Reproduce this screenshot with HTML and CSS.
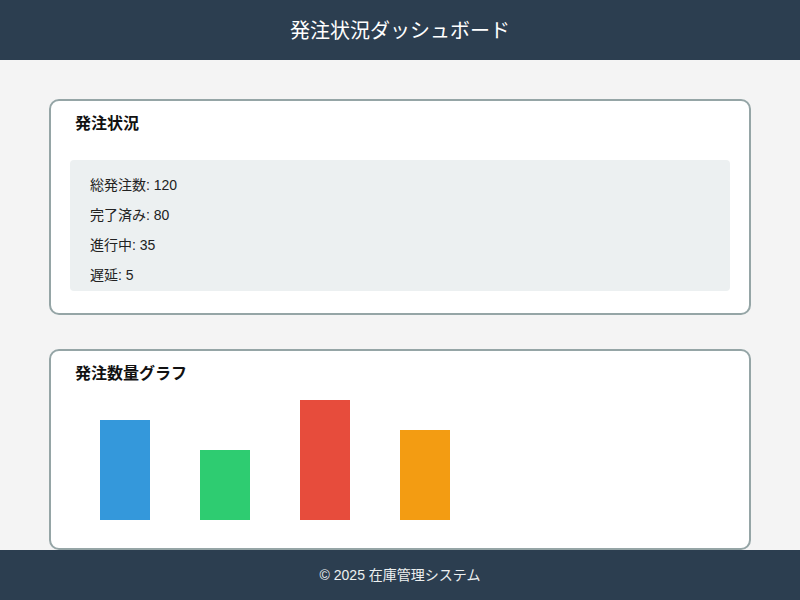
FILE: index.html
```html
<!DOCTYPE html>
<html lang="ja">
<head>
<meta charset="utf-8">
<title>発注状況ダッシュボード</title>
<link rel="stylesheet" href="styles.css">
</head>
<body>
<header class="header">
  <h1 class="header-title">発注状況ダッシュボード</h1>
</header>
<main class="main">
  <section class="card card-status">
    <h2 class="card-title">発注状況</h2>
    <div class="stats">
      <p class="stat">総発注数: 120</p>
      <p class="stat">完了済み: 80</p>
      <p class="stat">進行中: 35</p>
      <p class="stat">遅延: 5</p>
    </div>
  </section>
  <section class="card card-graph">
    <h2 class="card-title">発注数量グラフ</h2>
    <div class="chart">
      <div class="bar bar-blue" style="height:100px"></div>
      <div class="bar bar-green" style="height:70px"></div>
      <div class="bar bar-red" style="height:120px"></div>
      <div class="bar bar-orange" style="height:90px"></div>
    </div>
  </section>
</main>
<footer class="footer">
  <p class="footer-text">© 2025 在庫管理システム</p>
</footer>
</body>
</html>
```
FILE: styles.css
```css
* { box-sizing: border-box; }
html, body { margin: 0; padding: 0; }
body {
  width: 800px;
  height: 600px;
  overflow: hidden;
  background: #f4f4f4;
  font-family: "Liberation Sans", "Noto Sans CJK JP", sans-serif;
  color: #222;
}
.header {
  height: 60px;
  background: #2c3e50;
  display: flex;
  align-items: center;
  justify-content: center;
}
.header-title {
  margin: 0;
  font-size: 20px;
  font-weight: normal;
  color: #ffffff;
  line-height: 24px;
  padding-top: 2px;
}
.main {
  padding: 39px 49px 0;
}
.card {
  background: #ffffff;
  border: 2px solid #95a5a6;
  border-radius: 10px;
  padding: 10px 19px 22px;
}
.card-status { margin-bottom: 34px; }
.card-graph { padding-bottom: 28px; }
.card-title {
  margin: 0;
  padding-left: 5px;
  font-size: 16px;
  line-height: 26px;
  font-weight: bold;
  color: #111;
}
.card-status .card-title { margin-bottom: 23px; }
.stats {
  background: #ecf0f1;
  border-radius: 4px;
  padding: 15px 20px 6px;
  display: flex;
  flex-direction: column;
  gap: 10px;
}
.stat {
  margin: 0;
  font-size: 14px;
  line-height: 20px;
  color: #222;
}
.chart {
  margin-top: 13px;
  height: 120px;
  padding-left: 30px;
  display: flex;
  align-items: flex-end;
  gap: 50px;
}
.bar { width: 50px; }
.bar-blue { background: #3498db; }
.bar-green { background: #2ecc71; }
.bar-red { background: #e74c3c; }
.bar-orange { background: #f39c12; }
.footer {
  height: 50px;
  background: #2c3e50;
  display: flex;
  align-items: center;
  justify-content: center;
}
.footer-text {
  margin: 0;
  font-size: 14px;
  line-height: 20px;
  color: #ecf0f1;
}
```
